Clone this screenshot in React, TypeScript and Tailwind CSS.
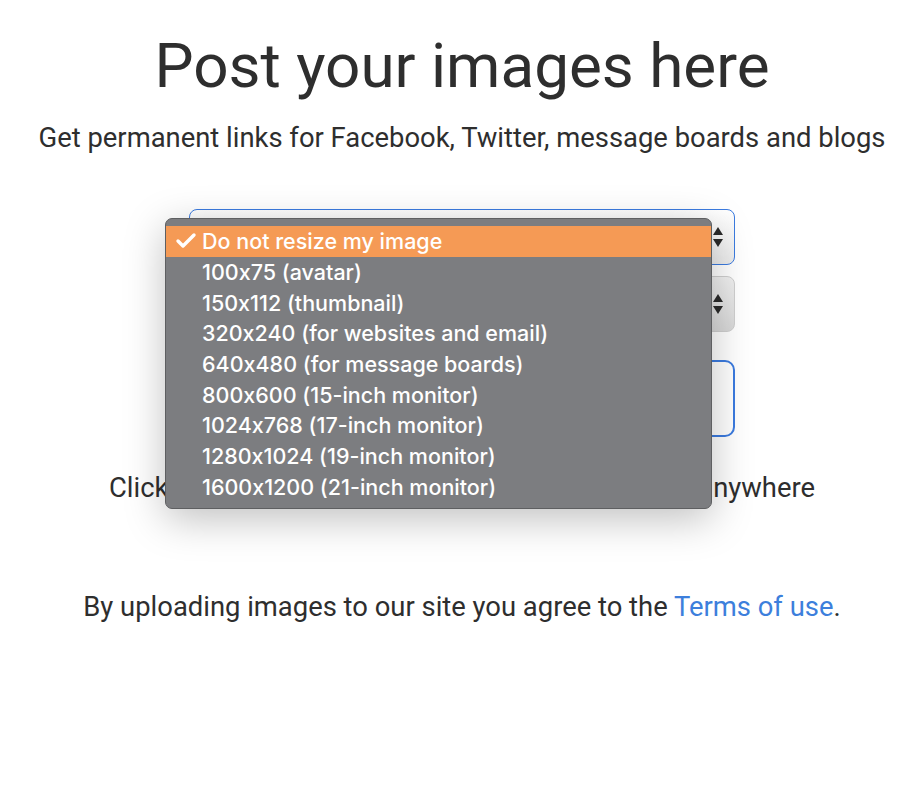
import { Check } from 'lucide-react';

const sizes = [
    'Do not resize my image',
    '100x75 (avatar)',
    '150x112 (thumbnail)',
    '320x240 (for websites and email)',
    '640x480 (for message boards)',
    '800x600 (15-inch monitor)',
    '1024x768 (17-inch monitor)',
    '1280x1024 (19-inch monitor)',
    '1600x1200 (21-inch monitor)',
];

function Arrows() {
    return (
        <svg width="12" height="22" viewBox="0 0 12 22" className="text-[#2b2b2b]">
            <path d="M6 1 L11 9 L1 9 Z" fill="currentColor" />
            <path d="M6 21 L11 13 L1 13 Z" fill="currentColor" />
        </svg>
    );
}

export default function App() {
    return (
        <div className="min-h-[800px] bg-white pl-[18px] font-['Roboto',sans-serif] text-[#2e2e2e]">
            <div className="flex flex-col items-center">
                <h1 className="mt-[24px] text-[62px] leading-[84px] font-normal">Post your images here</h1>
                <p className="mt-[14px] text-[27.4px] leading-[32px]">Get permanent links for Facebook, Twitter, message boards and blogs</p>

                <div className="mt-[55px] w-[546px] flex flex-col">
                    {/* resize select + open menu */}
                    <div className="relative">
                        <div className="h-[56px] rounded-[8px] border border-[#3b7be0] bg-gradient-to-b from-white to-[#ececec] flex items-center justify-end pr-[10px]">
                            <Arrows />
                        </div>

                        <div className="absolute left-[-24px] top-[9px] w-[547px] h-[291px] z-10 rounded-[7px] border border-[#5e5f61] bg-[#7c7d80] shadow-[0_10px_40px_rgba(0,0,0,0.25)] py-[7px] font-['Inter',sans-serif] [font-feature-settings:'calt'_0] font-medium text-white text-[21.5px]">
                            {sizes.map((s, i) => (
                                <div
                                    key={s}
                                    className={`h-[30.7px] flex items-center ${i === 0 ? 'bg-[#f59a55]' : ''}`}
                                >
                                    <span className="w-[36px] flex justify-end pr-[4px]">
                                        {i === 0 && <Check className="w-[24px] h-[24px]" strokeWidth={3.4} />}
                                    </span>
                                    <span>{s}</span>
                                </div>
                            ))}
                        </div>
                    </div>

                    {/* expire select */}
                    <div className="mt-[11px] h-[56px] rounded-[8px] border border-[#cfcfcf] bg-gradient-to-b from-[#f0f0f0] to-[#d8d8d8] flex items-center justify-end pr-[10px]">
                        <Arrows />
                    </div>

                    {/* choose images button */}
                    <div className="mt-[28px] h-[77px] rounded-[10px] border-2 border-[#3b7be0] bg-white" />
                </div>

                <p className="mt-[35px] text-[27.4px] leading-[32px]">Click the button to pick images or drag and drop anywhere</p>

                <p className="mt-[87px] text-[27.4px] leading-[32px]">
                    By uploading images to our site you agree to the{' '}
                    <a className="text-[#3d7fdc]">Terms of use</a>.
                </p>
            </div>
        </div>
    );
}
